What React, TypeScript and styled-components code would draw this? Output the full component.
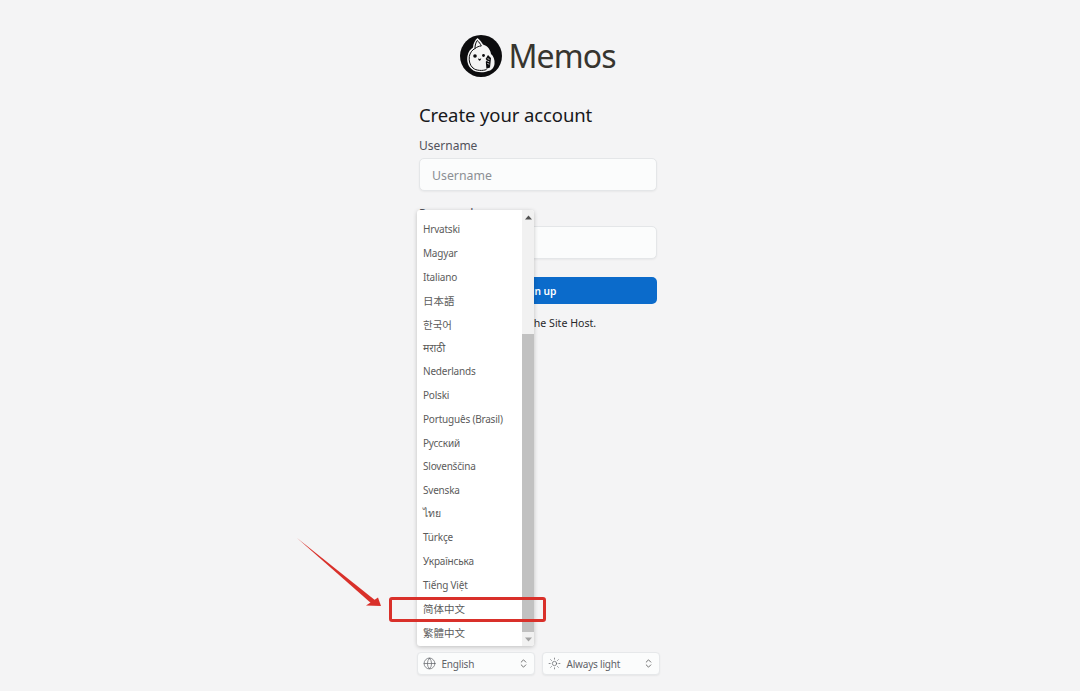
import React from "react";
import styled, { createGlobalStyle } from "styled-components";
import { Globe, Sun, ChevronsUpDown } from "lucide-react";

const FONT = `"Noto Sans", "Open Sans", "Noto Sans CJK SC", "Noto Sans CJK JP", "Noto Sans CJK KR", sans-serif`;

const Global = createGlobalStyle`
  html, body { margin: 0; padding: 0; background: #f4f4f5; }
  * { box-sizing: border-box; }
  body { font-family: ${FONT}; }
`;

const Page = styled.div`
  position: relative;
  width: 1080px;
  height: 691px;
  padding-right: 4px;
  overflow: hidden;
  background: #f4f4f5;
  display: flex;
  flex-direction: column;
  align-items: center;
`;

const Column = styled.main`
  width: 238px;
  margin-top: 35px;
  flex: 1;
  display: flex;
  flex-direction: column;
`;

const Brand = styled.div`
  height: 42px;
  display: flex;
  align-items: center;
  justify-content: center;
  gap: 6px;
`;

const BrandName = styled.span`
  font-size: 32px;
  line-height: 42px;
  color: #37352f;
  letter-spacing: -0.9px;
`;

const Title = styled.h1`
  margin: 24px 0 0;
  font-size: 18.5px;
  line-height: 27px;
  font-weight: 400;
  letter-spacing: -0.1px;
  color: #18181b;
`;

const Label = styled.label<{ $gap: number }>`
  display: block;
  margin-top: ${(p) => p.$gap}px;
  font-size: 12px;
  line-height: 18px;
  color: #52525b;
`;

const Input = styled.div`
  height: 33px;
  margin-top: 3px;
  padding: 1px 12px 0;
  display: flex;
  align-items: center;
  background: #fbfcfc;
  border: 1px solid #e4e6e8;
  border-radius: 5px;
  box-shadow: 0 1px 2px rgba(0, 0, 0, 0.05);
  font-size: 12.3px;
  color: #8b8f94;
`;

const SubmitButton = styled.div`
  height: 27px;
  margin-top: 18px;
  display: flex;
  align-items: center;
  justify-content: center;
  background: #0b6bcb;
  border-radius: 5px;
  color: #fff;
  font-size: 10.2px;
  font-weight: 600;
`;

const Hint = styled.p`
  margin: 11px 0 0;
  font-size: 10.6px;
  line-height: 16px;
  color: #27272a;
`;

const Footer = styled.footer`
  width: 243px;
  margin-bottom: 16px;
  display: flex;
  gap: 7px;
`;

const SelectBox = styled.div`
  width: 118px;
  height: 23px;
  padding: 0 5px;
  display: flex;
  align-items: center;
  gap: 6px;
  background: #fbfcfc;
  border: 1px solid #e6e8ea;
  border-radius: 4px;
  box-shadow: 0 1px 2px rgba(0, 0, 0, 0.06);
  font-size: 10px;
  letter-spacing: -0.2px;
  color: #5f6368;
`;

const SelectText = styled.span`
  flex: 1;
`;

const Dropdown = styled.div`
  position: absolute;
  left: 417px;
  top: 210px;
  width: 117px;
  height: 436px;
  display: flex;
  overflow: hidden;
  background: #fff;
  border-radius: 3px;
  box-shadow: 0 1px 4px rgba(0, 0, 0, 0.22);
`;

const List = styled.ul`
  flex: 1;
  margin: 0;
  padding: 7.5px 0 0;
  list-style: none;
  overflow: hidden;
`;

const Item = styled.li<{ $script?: boolean }>`
  height: 23.7px;
  padding-left: 6px;
  display: flex;
  align-items: center;
  font-size: ${(p) => (p.$script ? "10.5px" : "10px")};
  letter-spacing: ${(p) => (p.$script ? "0" : "-0.2px")};
  color: #5b5b5b;
  white-space: nowrap;
`;

const Scrollbar = styled.div`
  width: 12px;
  display: flex;
  flex-direction: column;
  background: #f1f1f1;
`;

const ScrollArrow = styled.div`
  height: 14px;
  display: flex;
  align-items: center;
  justify-content: center;
`;

const ScrollTrack = styled.div`
  flex: 1;
  padding-top: 110px;
  display: flex;
`;

const ScrollThumb = styled.div`
  flex: 1;
  background: #c1c1c1;
`;

const Highlight = styled.div`
  position: absolute;
  left: 389px;
  top: 597px;
  width: 157px;
  height: 25px;
  border: 3px solid #d9302a;
  border-radius: 3px;
`;

const ArrowMark = styled.svg`
  position: absolute;
  left: 290px;
  top: 530px;
`;

const LANGS: [string, boolean?][] = [
  ["Hrvatski"], ["Magyar"], ["Italiano"], ["日本語", true], ["한국어", true], ["मराठी", true], ["Nederlands"], ["Polski"],
  ["Português (Brasil)"], ["Русский"], ["Slovenščina"], ["Svenska"], ["ไทย", true], ["Türkçe"], ["Українська"],
  ["Tiếng Việt"], ["简体中文", true], ["繁體中文", true],
];

const Logo = () => (
  <svg width="42" height="42" viewBox="0 0 42 42" aria-hidden="true">
    <circle cx="21" cy="21" r="21" fill="#0c0c0e" />
    <path
      d="M17.5 3C20 5 21.5 7 23 9.5 28 11 30.5 15 31 19 33.5 21 35 25 34.5 29 34 33 31 36 28 36 24 38 15 38 11.5 34 8 31 6.5 26 7.5 21 8 17 10.5 14 13 12.5 13 9 15 5 17.5 3z"
      fill="#f4f4f4"
    />
    <path
      d="M17.3 5.5C15.8 7.5 15 10 15 13.5 12 15 10 18 9.3 21.5 8.7 26 10 30.5 13 33 16 35.8 23 36 26.5 34.5"
      fill="none"
      stroke="#0c0c0e"
      strokeWidth="1"
    />
    <path d="M17.3 5.5C19 7 20.5 9 21.3 11 19 11 17 12 15 13.5" fill="none" stroke="#0c0c0e" strokeWidth="1" />
    <circle cx="15" cy="21" r="1.8" fill="#0c0c0e" />
    <circle cx="23.5" cy="20.5" r="1.4" fill="#0c0c0e" />
    <path d="M18 23.2c1 .9 2.2.9 3.2 0-.2 1.5-.9 2.5-1.6 2.5s-1.4-1-1.6-2.5z" fill="#0c0c0e" />
    <path d="M28 20l3 3-1 9.5-3.6 1.2-.6-7 1.2-1.2-1.4-1.6z" fill="#0c0c0e" />
    <path d="M27.5 23.6l2 .8M27.3 26l2 .8M27.3 28.4l2 .8" stroke="#f4f4f4" strokeWidth=".8" />
  </svg>
);

const UpTriangle = () => (
  <svg width="7" height="5" viewBox="0 0 7 5" aria-hidden="true"><path d="M3.5 .5L7 4.5H0z" fill="#505050" /></svg>
);
const DownTriangle = () => (
  <svg width="7" height="5" viewBox="0 0 7 5" aria-hidden="true"><path d="M3.5 4.5L7 .5H0z" fill="#a3a3a3" /></svg>
);

export default function App() {
  return (
    <Page>
      <Global />
      <Column>
        <Brand>
          <Logo />
          <BrandName>Memos</BrandName>
        </Brand>
        <Title>Create your account</Title>
        <Label $gap={9}>Username</Label>
        <Input>Username</Input>
        <Label $gap={14}>Password</Label>
        <Input>Password</Input>
        <SubmitButton>Sign up</SubmitButton>
        <Hint>You are registering as the Site Host.</Hint>
      </Column>
      <Footer>
        <SelectBox>
          <Globe size={13} strokeWidth={1.3} />
          <SelectText>English</SelectText>
          <ChevronsUpDown size={11} strokeWidth={1.6} color="#404040" />
        </SelectBox>
        <SelectBox>
          <Sun size={13} strokeWidth={1.3} />
          <SelectText>Always light</SelectText>
          <ChevronsUpDown size={11} strokeWidth={1.6} color="#404040" />
        </SelectBox>
      </Footer>
      <Dropdown>
        <List>
          {LANGS.map(([l, s]) => (
            <Item key={l} $script={s}>{l}</Item>
          ))}
        </List>
        <Scrollbar>
          <ScrollArrow><UpTriangle /></ScrollArrow>
          <ScrollTrack><ScrollThumb /></ScrollTrack>
          <ScrollArrow><DownTriangle /></ScrollArrow>
        </Scrollbar>
      </Dropdown>
      <Highlight />
      <ArrowMark width="100" height="82" viewBox="0 0 100 82" aria-hidden="true">
        <path d="M7 8L84.8 70L82 74z" fill="#d9302a" />
        <path d="M91 76L88 67.5L76 75.5z" fill="#d9302a" />
      </ArrowMark>
    </Page>
  );
}
